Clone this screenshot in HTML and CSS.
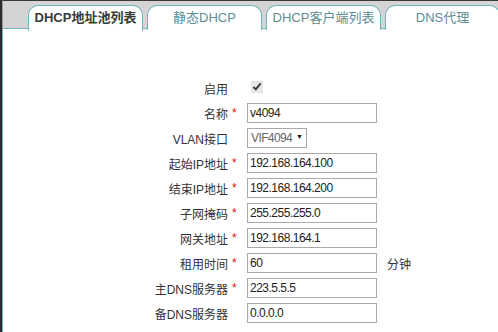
FILE: index.html
```html
<!DOCTYPE html>
<html lang="zh-CN">
<head>
  <meta charset="UTF-8">
  <meta name="viewport" content="width=device-width, initial-scale=1.0">
  <title>DHCP地址池</title>
  <link rel="stylesheet" href="styles.css">
</head>
<body>
  <div class="tab-bar">
    <a class="tab active" href="#pool">DHCP地址池列表</a>
    <a class="tab" href="#static">静态DHCP</a>
    <a class="tab" href="#clients">DHCP客户端列表</a>
    <a class="tab" href="#dns">DNS代理</a>
  </div>

  <main class="panel">
    <form class="pool-form">
      <label class="lbl">启用</label>
      <span class="req"></span>
      <div class="field"><input type="checkbox" class="check" checked></div>
      <span></span>

      <label class="lbl">名称</label>
      <span class="req">*</span>
      <div class="field"><input type="text" value="v4094"></div>
      <span></span>

      <label class="lbl">VLAN接口</label>
      <span class="req"></span>
      <div class="field">
        <div class="select-box">
          <select><option>VIF4094</option></select>
        </div>
      </div>
      <span></span>

      <label class="lbl">起始IP地址</label>
      <span class="req">*</span>
      <div class="field"><input type="text" value="192.168.164.100"></div>
      <span></span>

      <label class="lbl">结束IP地址</label>
      <span class="req">*</span>
      <div class="field"><input type="text" value="192.168.164.200"></div>
      <span></span>

      <label class="lbl">子网掩码</label>
      <span class="req">*</span>
      <div class="field"><input type="text" value="255.255.255.0"></div>
      <span></span>

      <label class="lbl">网关地址</label>
      <span class="req">*</span>
      <div class="field"><input type="text" value="192.168.164.1"></div>
      <span></span>

      <label class="lbl">租用时间</label>
      <span class="req">*</span>
      <div class="field"><input type="text" value="60"></div>
      <span class="unit">分钟</span>

      <label class="lbl">主DNS服务器</label>
      <span class="req">*</span>
      <div class="field"><input type="text" value="223.5.5.5"></div>
      <span></span>

      <label class="lbl">备DNS服务器</label>
      <span class="req"></span>
      <div class="field"><input type="text" value="0.0.0.0"></div>
      <span></span>
    </form>
  </main>
</body>
</html>
```

FILE: styles.css
```css
html, body {
  height: 100%;
}
body {
  margin: 0;
  font-family: "Liberation Sans", "Noto Sans CJK SC", sans-serif;
  font-size: 12px;
  color: #333;
  background-color: #fff;
  border-left: 2px solid #2b2b2b;
  box-sizing: border-box;
  overflow: hidden;
}
.tab-bar {
  display: flex;
  gap: 4px;
  height: 29px;
  padding: 4px 0 0 25px;
  box-sizing: border-box;
  background-color: #d4d4d4;
  border-top: 1px solid #3a3a3a;
  border-bottom: 1px solid #6bb5bb;
  border-left: 1px solid #9a9a9a;
}
.tab {
  flex: 0 0 auto;
  width: 115px;
  height: 25px;
  margin-bottom: -1px;
  box-sizing: border-box;
  border: 1px solid #6bb5bb;
  border-bottom: none;
  border-radius: 10px 10px 0 0;
  background-color: #fff;
  color: #5c8d92;
  font-size: 13px;
  line-height: 24px;
  text-align: center;
  text-decoration: none;
}
.tab.active {
  color: #3a3a3a;
  font-weight: bold;
  height: 26px;
}
.panel {
  height: calc(100% - 29px);
  border-left: 1px solid #6bb5bb;
}
.pool-form {
  display: grid;
  grid-template-columns: 225px 19px 132px auto;
  grid-auto-rows: 20px;
  row-gap: 5px;
  align-items: center;
  padding-top: 49px;
}
.lbl {
  text-align: right;
  color: #333;
}
.req {
  color: #e01010;
  padding-left: 4px;
  font-size: 12px;
}
.field input[type="text"] {
  width: 130px;
  height: 20px;
  box-sizing: border-box;
  margin: 0;
  padding: 0 2px;
  border: 1px solid #a9a9a9;
  font-family: "Liberation Sans", sans-serif;
  font-size: 12px;
  letter-spacing: -0.5px;
  color: #222;
}
.check {
  width: 12px;
  height: 12px;
  margin: 0 0 0 4px;
  accent-color: #e6e6e6;
}
.select-box {
  position: relative;
  width: 60px;
}
.select-box select {
  appearance: none;
  width: 60px;
  height: 20px;
  margin: 0;
  padding: 0 0 0 3px;
  border: 1px solid #a9a9a9;
  background: #fff;
  font-family: "Liberation Sans", sans-serif;
  font-size: 12px;
  letter-spacing: -0.6px;
  color: #666;
}
.select-box::after {
  content: "▼";
  position: absolute;
  right: 4px;
  top: 5px;
  font-size: 7px;
  color: #111;
  pointer-events: none;
}
.unit {
  padding-left: 8px;
  color: #333;
}
```
